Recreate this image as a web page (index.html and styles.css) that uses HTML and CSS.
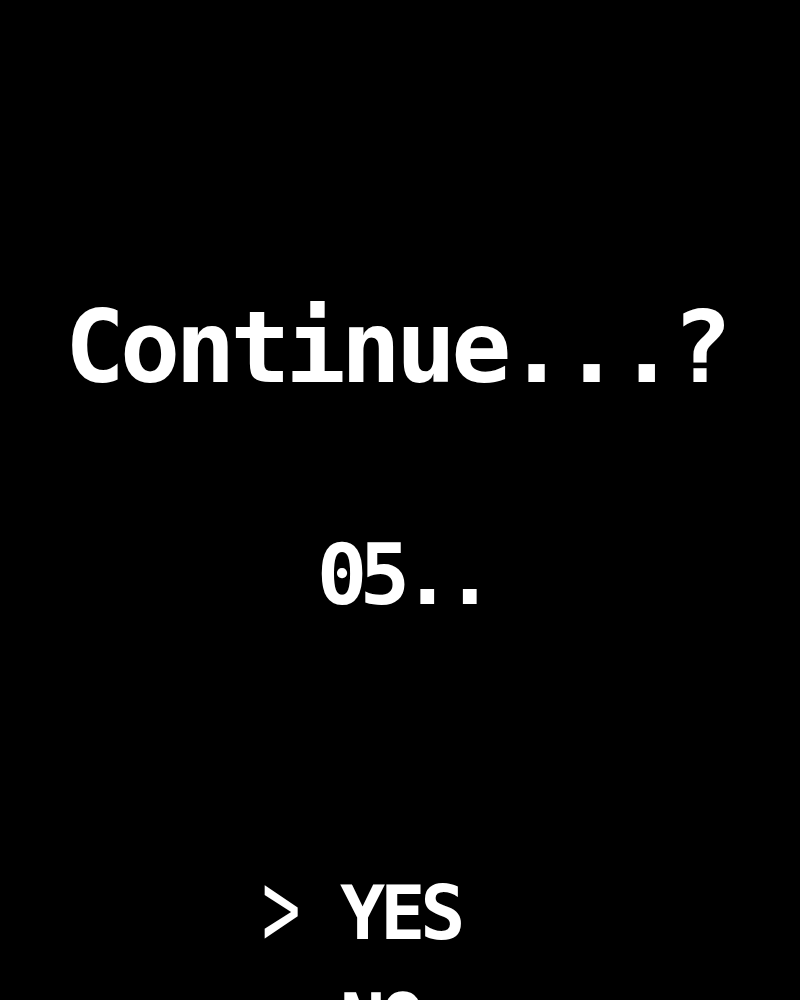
FILE: index.html
```html
<!DOCTYPE html>
<html lang="en">
<head>
<meta charset="utf-8">
<title>Continue...?</title>
<link rel="stylesheet" href="styles.css">
</head>
<body>
  <main class="screen">
    <h1 class="prompt">Continue...?</h1>
    <div class="countdown">05..</div>
    <ul class="menu">
      <li class="option selected"><span class="cursor">&gt;</span><span class="label">YES</span></li>
      <li class="option"><span class="cursor"></span><span class="label">NO</span></li>
    </ul>
  </main>
</body>
</html>
```

FILE: styles.css
```css
html, body {
  margin: 0;
  padding: 0;
  background: #000;
}

body {
  color: #fff;
  font-family: "DejaVu Sans Mono", "Liberation Mono", monospace;
  font-weight: bold;
  overflow: hidden;
  height: 1000px;
}

.screen {
  display: flex;
  flex-direction: column;
  align-items: center;
  padding-top: 298px;
}

.prompt {
  margin: 0;
  padding-right: 8px;
  font-size: 100px;
  line-height: 100px;
  letter-spacing: -5px;
  font-weight: bold;
}

.countdown {
  margin-top: 135px;
  font-size: 84px;
  line-height: 84px;
  letter-spacing: -8px;
  padding-left: 4px;
}

.menu {
  list-style: none;
  margin: 259px 0 0 262px;
  padding: 0;
  align-self: flex-start;
  display: flex;
  flex-direction: column;
  gap: 33px;
}

.option {
  display: flex;
  font-size: 75px;
  line-height: 75px;
  letter-spacing: -5px;
}

/* selection arrow: stretched to the full cap height of the labels */
.cursor {
  width: 78px;
  font-weight: normal;
  transform: scale(0.85, 1.45);
  transform-origin: left 62%;
}
```
